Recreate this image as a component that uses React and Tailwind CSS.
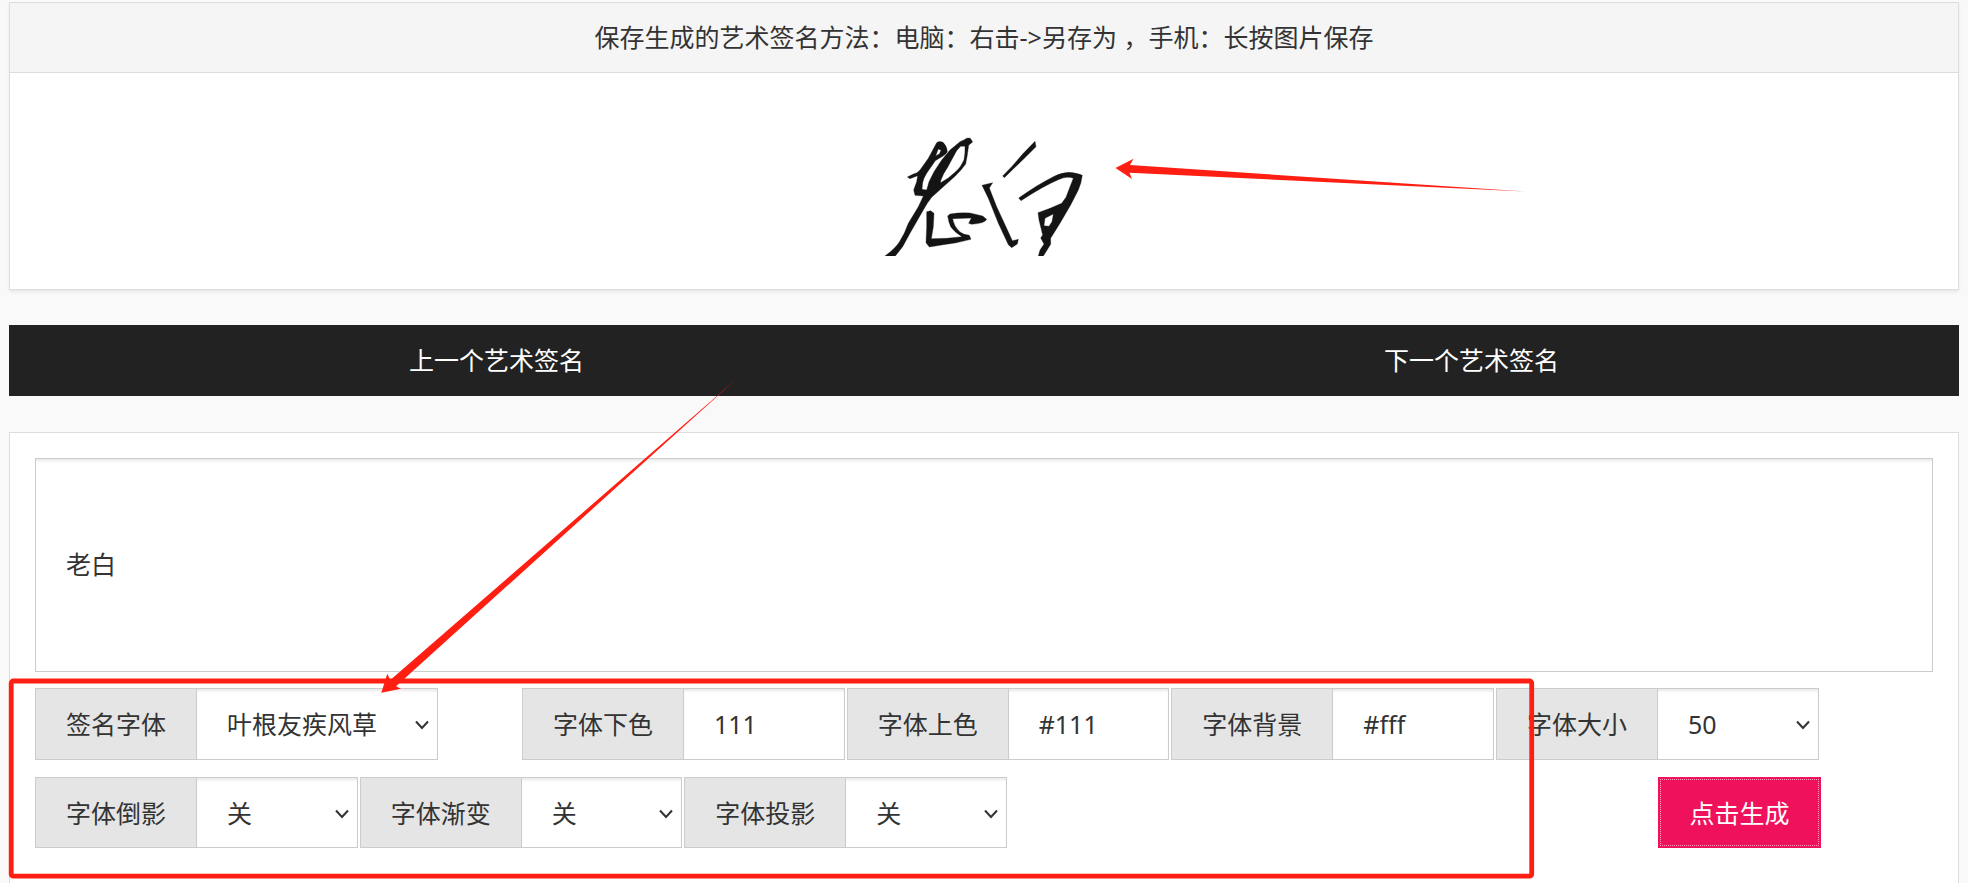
import { useState } from 'react'

const shadowInset = 'shadow-[inset_0_3px_3px_-1px_rgba(0,0,0,0.09)]'

function Signature() {
  return (
    <svg className="h-[120px] w-[200px]" viewBox="72 78 600 360" fill="#141414" fillRule="evenodd" stroke="#141414" strokeWidth="1" strokeLinejoin="round" role="img" aria-label="艺术签名">
      <path d="M142 201 L160 192 Q172 190 180 180 L205 145 L230 98 Q238 91 249 97 Q261 108 262 125 Q258 134 248 139 L226 152 L200 190 Q191 204 188 218 L186 238 L200 240 L207 215 L222 185 L245 150 L270 120 L300 95 L313 89 Q320 81 331 85 L338 96 L326 106 L322 135 L317 162 Q303 182 286 198 L250 230 L215 262 Q202 278 190 300 L150 370 L128 410 L106 438 L75 438 Q106 415 118 396 Q134 372 145 340 L175 290 L190 258 L165 256 L161 240 L170 215 L173 197 L150 206 Z M227 137 L235 117 L243 121 L238 132 Z M302 109 L315 109 Q316 130 312 149 Q303 171 285 187 Q266 206 242 218 L242 212 Q250 190 264 170 Q280 140 290 122 Z" />
      <path d="M200 305 L212 302 L222 310 L220 350 L214 386 L260 385 L306 380 Q283 366 272 350 Q266 338 263 318 L270 312 Q300 307 330 309 L368 318 L380 328 Q376 340 335 343 L326 340 L334 324 L278 326 Q281 348 300 366 Q314 376 328 376 L333 388 Q290 400 250 404 L208 411 L198 398 L200 350 Z" />
      <path d="M366 226 L398 218 L388 234 L410 290 L440 355 L457 392 L475 388 L472 402 L455 413 L445 404 L415 340 L385 265 Z" />
      <path d="M428 198 L455 170 L490 130 L525 94 L528 110 L500 138 L462 175 L433 203 Z" />
      <path d="M476 264 Q530 225 580 200 Q604 188 625 187 Q650 188 667 196 Q664 220 655 240 L632 285 L600 340 L572 385 L572 403 L550 438 L535 438 L540 420 L552 402 L542 384 L548 375 L537 330 L534 308 L570 295 L605 280 L618 262 L632 225 L640 205 Q622 197 595 209 Q550 228 483 272 Z M552 347 L555 325 L580 312 L576 335 L567 349 Z" />
    </svg>
  )
}

function Field({ id, label, className, children }) {
  return (
    <div className={`flex ${className}`}>
      <label className="flex w-[162px] shrink-0 items-center justify-center border border-[#ccc] bg-[#e5e5e5]" htmlFor={id}>{label}</label>
      <div className="relative -ml-px min-w-0 flex-1">{children}</div>
    </div>
  )
}

function SelectField({ id, label, options, className = 'col-span-4 pr-[2px]' }) {
  return (
    <Field id={id} label={label} className={className}>
      <select className={`h-full w-full appearance-none border border-[#ccc] bg-white pl-[30px] outline-none ${shadowInset}`} id={id}>
        {options.map((option) => <option key={option}>{option}</option>)}
      </select>
      <svg className="pointer-events-none absolute top-1/2 right-2 h-4 w-4 -translate-y-1/2" viewBox="0 0 16 16" fill="none" stroke="#333" strokeWidth="2">
        <path d="M2 5.5 L8 12 L14 5.5" />
      </svg>
    </Field>
  )
}

function TextField({ id, label, value }) {
  const [text, setText] = useState(value)

  return (
    <Field id={id} label={label} className="col-span-4 pr-[2px]">
      <input className={`h-full w-full border border-[#ccc] bg-white pl-[30px] outline-none ${shadowInset}`} id={id} type="text" value={text} onChange={(e) => setText(e.target.value)} />
    </Field>
  )
}

// Hand-drawn style red marks that lie over the page
function Annotations() {
  return (
    <svg className="pointer-events-none absolute top-0 left-0 h-[883px] w-[1968px]" viewBox="0 0 1968 883" fill="#ff1f12" aria-hidden="true">
      <path d="M1115.5 168 L1133.5 158.7 L1130 165 L1525 191.5 L1129.5 172.8 L1132 179 Z" />
      <path d="M381.3 692.7 L387.3 673.7 L390.3 680 L737 378.5 L396 686.2 L401 688.7 Z" />
      <rect x="11.2" y="681" width="1520.5" height="195.2" rx="2" fill="none" stroke="#ff1f12" strokeWidth="4.8" />
    </svg>
  )
}

function App() {
  const [name, setName] = useState('老白')

  return (
    <div className="relative flex min-h-screen flex-col overflow-hidden bg-[#f9f9f9] px-[9px] pt-[2px] font-['Noto_Sans','Noto_Sans_CJK_SC',sans-serif] text-[25px] leading-[38px] text-[#333]" lang="zh-CN">
      <section className="border border-[#ddd] bg-white shadow-[0_2px_3px_rgba(0,0,0,0.07)]">
        <h2 className="flex h-[70px] items-center justify-center border-b border-[#ddd] bg-[#f5f5f5] pb-[2px]">
          保存生成的艺术签名方法：电脑：右击-&gt;另存为 ，手机：长按图片保存
        </h2>
        <div className="flex justify-center pt-[63px] pb-[33px]">
          <Signature />
        </div>
      </section>

      <nav className="mt-[35px] grid h-[71px] shrink-0 grid-cols-2 bg-[#222] pb-[2px] text-white">
        <a className="flex items-center justify-center" href="#prev">上一个艺术签名</a>
        <a className="flex items-center justify-center" href="#next">下一个艺术签名</a>
      </nav>

      <form className="mt-9 flex-1 border border-b-0 border-[#ddd] bg-white p-[25px]" onSubmit={(e) => e.preventDefault()}>
        <textarea className={`block h-[214px] w-full resize-none border border-[#ccc] px-[30px] py-[86px] outline-none ${shadowInset}`} aria-label="签名" value={name} onChange={(e) => setName(e.target.value)} />
        <div className="mt-4 -mr-[50px] grid grid-cols-24 grid-rows-[72px_71px] gap-y-[17px]">
          <SelectField id="font" label="签名字体" options={['叶根友疾风草']} className="col-span-5 pr-[3px]" />
          <div />
          <TextField id="color-bottom" label="字体下色" value="111" />
          <TextField id="color-top" label="字体上色" value="#111" />
          <TextField id="background" label="字体背景" value="#fff" />
          <SelectField id="size" label="字体大小" options={['50', '60', '70']} />
          <div className="col-span-2" />
          <SelectField id="reflection" label="字体倒影" options={['关', '开']} />
          <SelectField id="gradient" label="字体渐变" options={['关', '开']} />
          <SelectField id="shadow" label="字体投影" options={['关', '开']} />
          <button className="col-span-2 col-start-21 bg-[#ef115b] text-white outline-1 -outline-offset-3 outline-dotted outline-white/60" type="submit">点击生成</button>
        </div>
      </form>

      <Annotations />
    </div>
  )
}

export default App
